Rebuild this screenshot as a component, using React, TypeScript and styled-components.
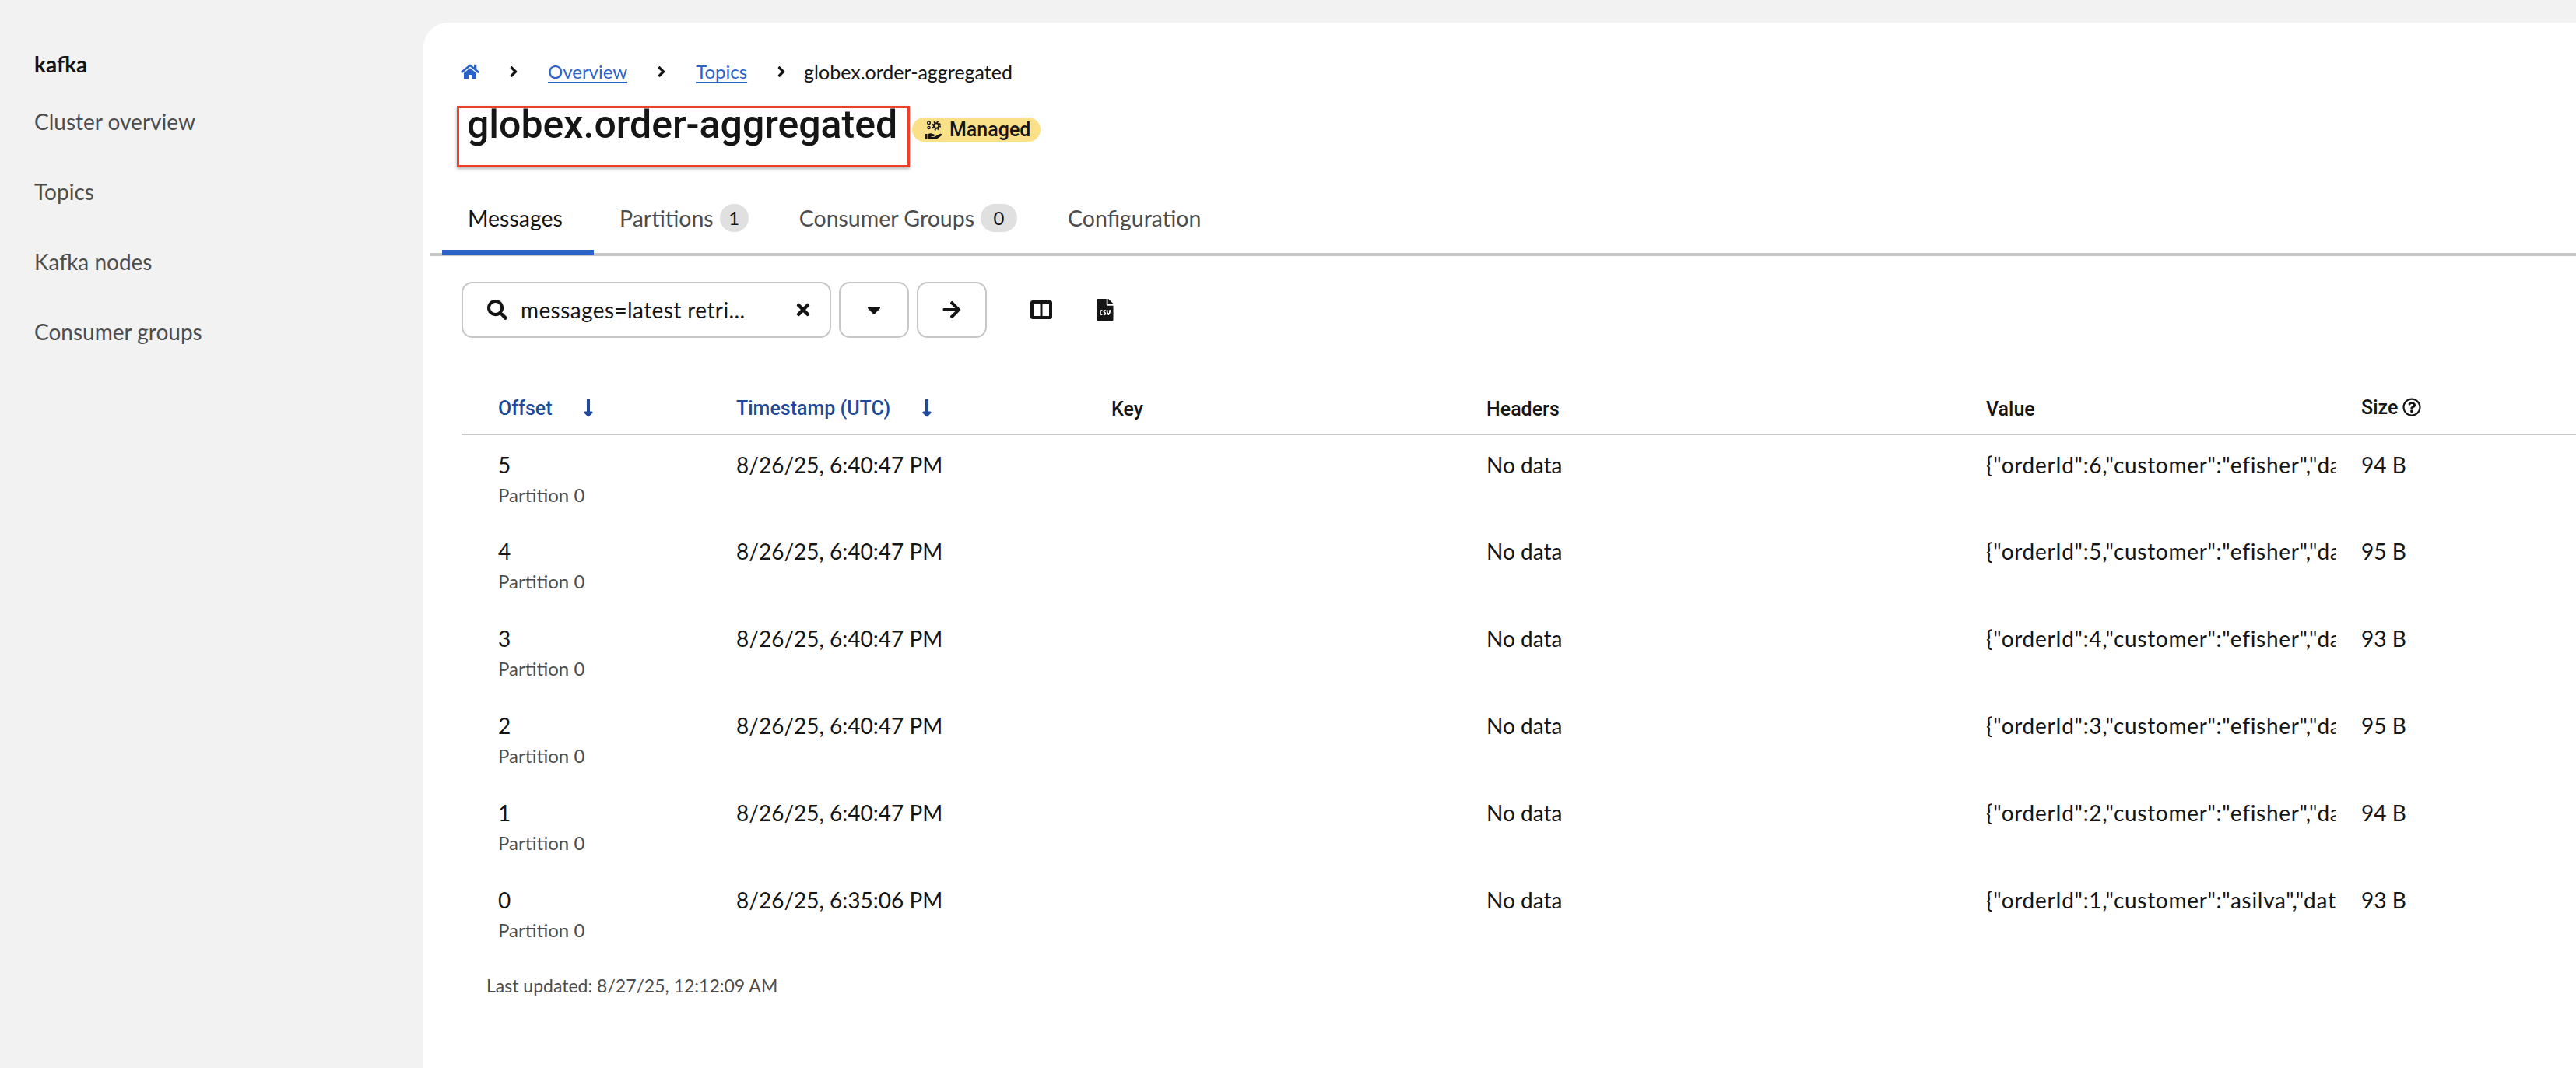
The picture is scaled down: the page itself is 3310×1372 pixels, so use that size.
import React from "react";
import styled, { createGlobalStyle } from "styled-components";
import {
  FaAngleRight,
  FaArrowRight,
  FaCaretDown,
  FaFileCsv,
  FaHome,
  FaLongArrowAltDown,
  FaRegQuestionCircle,
  FaSearch,
  FaTimes,
} from "react-icons/fa";

const GlobalStyle = createGlobalStyle`
  html, body {
    margin: 0;
    padding: 0;
    background: #f2f2f2;
    overflow: hidden;
  }
  body {
    font-family: "Lato", "Liberation Sans", sans-serif;
    font-size: 28px;
    line-height: 42px;
    color: #151515;
  }
`;

const navItems = ["Cluster overview", "Topics", "Kafka nodes", "Consumer groups"];

const messages = [
  { offset: 5, time: "8/26/25, 6:40:47 PM", value: '{"orderId":6,"customer":"efisher","dat', size: "94 B" },
  { offset: 4, time: "8/26/25, 6:40:47 PM", value: '{"orderId":5,"customer":"efisher","dat', size: "95 B" },
  { offset: 3, time: "8/26/25, 6:40:47 PM", value: '{"orderId":4,"customer":"efisher","dat', size: "93 B" },
  { offset: 2, time: "8/26/25, 6:40:47 PM", value: '{"orderId":3,"customer":"efisher","dat', size: "95 B" },
  { offset: 1, time: "8/26/25, 6:40:47 PM", value: '{"orderId":2,"customer":"efisher","dat', size: "94 B" },
  { offset: 0, time: "8/26/25, 6:35:06 PM", value: '{"orderId":1,"customer":"asilva","date', size: "93 B" },
];

const ManagedIcon = () => (
  <svg width="22" height="24" viewBox="0 0 22 24" fill="#151515">
    <circle cx="14" cy="6.500" r="3.200" fill="none" stroke="#151515" strokeWidth="2" />
    <circle cx="14" cy="6.500" r="5" fill="none" stroke="#151515" strokeWidth="2" strokeDasharray="2 1.930" />
    <circle cx="4.500" cy="2.800" r="1.800" fill="none" stroke="#151515" strokeWidth="1.400" />
    <circle cx="4.500" cy="9" r="1.600" fill="none" stroke="#151515" strokeWidth="1.300" />
    <path d="M0 17h2.500v6.500H0zM3.500 17.300c1.800-1.300 3.500-1.300 5-.6l2.600.9c1.500.5 1.200 2.300-.4 2.300H7.500v.8h4l7.300-3.700c1.700-.8 3 1 1.800 2.200l-5 3.800c-.5.400-1 .5-1.600.5H3.500z" />
  </svg>
);

const ColumnsIcon = () => (
  <svg width="28" height="24" viewBox="0 0 28 24">
    <path
      fill="#151515"
      fillRule="evenodd"
      d="M3 0h22a3 3 0 0 1 3 3v18a3 3 0 0 1-3 3H3a3 3 0 0 1-3-3V3a3 3 0 0 1 3-3zm1 5v15h8.500V5zm11.500 0v15H24V5z"
    />
  </svg>
);

export default function App() {
  return (
    <Page>
      <GlobalStyle />
      <Sidebar>
        <ClusterName>kafka</ClusterName>
        {navItems.map((item) => (
          <NavItem key={item}>{item}</NavItem>
        ))}
      </Sidebar>
      <Main>
        <Breadcrumbs>
          <HomeLink>
            <FaHome size={24} />
          </HomeLink>
          <Crumb>
            <FaAngleRight size={22} />
          </Crumb>
          <CrumbLink>Overview</CrumbLink>
          <Crumb>
            <FaAngleRight size={22} />
          </Crumb>
          <CrumbLink>Topics</CrumbLink>
          <Crumb>
            <FaAngleRight size={22} />
          </Crumb>
          <CrumbCurrent>globex.order-aggregated</CrumbCurrent>
        </Breadcrumbs>

        <TitleRow>
          <Title>globex.order-aggregated</Title>
          <Badge>
            <ManagedIcon />
            Managed
          </Badge>
        </TitleRow>

        <Tabs>
          <Tab $active>Messages</Tab>
          <Tab>
            Partitions <Count>1</Count>
          </Tab>
          <Tab>
            Consumer Groups <Count $wide>0</Count>
          </Tab>
          <Tab>Configuration</Tab>
        </Tabs>

        <Toolbar>
          <SearchBox>
            <FaSearch size={26} />
            <SearchText>messages=latest retri...</SearchText>
            <FaTimes size={24} />
          </SearchBox>
          <IconButton>
            <FaCaretDown size={28} />
          </IconButton>
          <IconButton>
            <FaArrowRight size={26} />
          </IconButton>
          <PlainIcon>
            <ColumnsIcon />
          </PlainIcon>
          <PlainIcon>
            <FaFileCsv size={28} />
          </PlainIcon>
        </Toolbar>

        <Table>
          <colgroup>
            <col width="306" />
            <col width="482" />
            <col width="482" />
            <col width="642" />
            <col width="482" />
            <col />
          </colgroup>
          <thead>
            <tr>
              <HeadCell $sorted>
                Offset
                <SortArrow>
                  <FaLongArrowAltDown size={26} />
                </SortArrow>
              </HeadCell>
              <HeadCell $sorted>
                Timestamp (UTC)
                <SortArrow>
                  <FaLongArrowAltDown size={26} />
                </SortArrow>
              </HeadCell>
              <HeadCell>Key</HeadCell>
              <HeadCell>Headers</HeadCell>
              <HeadCell>Value</HeadCell>
              <HeadCell>
                Size
                <HelpIcon>
                  <FaRegQuestionCircle size={24} />
                </HelpIcon>
              </HeadCell>
            </tr>
          </thead>
          <tbody>
            {messages.map((m) => (
              <tr key={m.offset}>
                <Cell>
                  {m.offset}
                  <Partition>Partition 0</Partition>
                </Cell>
                <Cell>{m.time}</Cell>
                <Cell />
                <Cell>No data</Cell>
                <Cell>
                  <ValueClip>{m.value}</ValueClip>
                </Cell>
                <Cell>{m.size}</Cell>
              </tr>
            ))}
          </tbody>
        </Table>

        <LastUpdated>Last updated: 8/27/25, 12:12:09 AM</LastUpdated>
      </Main>
    </Page>
  );
}

const Page = styled.div`
  display: flex;
  width: 3310px;
  height: 1372px;
  overflow: hidden;
  background: #f2f2f2;
`;

const Sidebar = styled.nav`
  display: flex;
  flex-direction: column;
  flex: 0 0 544px;
  padding: 61px 0 0 44px;
  box-sizing: border-box;
`;

const ClusterName = styled.div`
  font-weight: 700;
  margin-bottom: 32px;
`;

const NavItem = styled.div`
  color: #4d4d4d;
  height: 90px;
`;

const Main = styled.main`
  flex: 1;
  margin-top: 29px;
  padding-top: 42px;
  background: #fff;
  border-top-left-radius: 32px;
  min-width: 0;
`;

const Breadcrumbs = styled.div`
  display: flex;
  align-items: center;
  padding-left: 48px;
  height: 42px;
  font-size: 25px;
`;

const HomeLink = styled.span`
  display: flex;
  color: #2b62c8;
`;

const Crumb = styled.span`
  display: flex;
  width: 88px;
  justify-content: center;
`;

const CrumbLink = styled.span`
  color: #2b62c8;
  font-size: 24px;
  text-decoration: underline;
  text-underline-offset: 4px;
`;

const CrumbCurrent = styled.span`
  margin-left: -15px;
`;

const TitleRow = styled.div`
  display: flex;
  align-items: flex-start;
  margin: 23px 0 0 43px;
`;

const Title = styled.h1`
  margin: 0;
  width: 582px;
  height: 79px;
  box-sizing: border-box;
  padding: 0 0 0 10px;
  border: 3px solid #ee3f28;
  box-shadow: 0 2px 4px rgba(0, 0, 0, 0.3);
  font-family: "Roboto", "Lato", sans-serif;
  font-size: 50px;
  font-weight: 500;
  line-height: 42px;
  white-space: nowrap;
`;

const Badge = styled.span`
  display: inline-flex;
  align-items: center;
  gap: 9px;
  height: 31px;
  margin: 15px 0 0 3px;
  padding: 0 13px 0 17px;
  border-radius: 16px;
  background: #fbe08a;
  font-family: "Roboto", "Lato", sans-serif;
  font-size: 25px;
  font-weight: 500;
  line-height: 31px;
`;

const Tabs = styled.div`
  display: flex;
  margin: 24px 0 0 8px;
  padding-left: 16px;
  height: 86px;
  border-bottom: 4px solid #c7c7c7;
`;

const Tab = styled.div<{ $active?: boolean }>`
  display: flex;
  align-items: center;
  gap: 8px;
  box-sizing: border-box;
  padding: 0 32px 0 33px;
  margin-bottom: -2px;
  font-size: 28.5px;
  min-width: ${(p) => (p.$active ? "195px" : "0")};
  color: ${(p) => (p.$active ? "#151515" : "#4d4d4d")};
  border-bottom: 6px solid ${(p) => (p.$active ? "#2b62c8" : "transparent")};
`;

const Count = styled.span<{ $wide?: boolean }>`
  display: inline-flex;
  align-items: center;
  justify-content: center;
  width: ${(p) => (p.$wide ? "47px" : "37px")};
  height: 36px;
  box-sizing: border-box;
  border-radius: 18px;
  background: #e0e0e0;
  font-size: 24px;
  color: #151515;
`;

const Toolbar = styled.div`
  display: flex;
  align-items: center;
  gap: 10px;
  margin: 33px 0 0 49px;
  height: 72px;
`;

const SearchBox = styled.div`
  display: flex;
  align-items: center;
  width: 475px;
  height: 72px;
  box-sizing: border-box;
  padding: 0 22px 0 31px;
  border: 2px solid #c7c7c7;
  border-radius: 14px;
  gap: 17px;
`;

const SearchText = styled.span`
  flex: 1;
  white-space: nowrap;
  letter-spacing: 0.4px;
`;

const IconButton = styled.div`
  display: flex;
  align-items: center;
  justify-content: center;
  width: 90px;
  height: 72px;
  box-sizing: border-box;
  border: 2px solid #c7c7c7;
  border-radius: 14px;
`;

const PlainIcon = styled.div`
  display: flex;
  align-items: center;
  justify-content: center;
  width: 28px;
  margin-left: 46px;
  &:last-child {
    margin-left: 44px;
  }
`;

const Table = styled.table`
  width: 2717px;
  margin: 57px 0 0 49px;
  table-layout: fixed;
  border-collapse: collapse;
`;

const HeadCell = styled.th<{ $sorted?: boolean }>`
  height: 67px;
  padding: ${(p) => (p.$sorted ? "5px" : "3px")} 0 0 47px;
  box-sizing: border-box;
  border-bottom: 2px solid #c7c7c7;
  text-align: left;
  font-family: "Roboto", "Lato", sans-serif;
  font-size: 25px;
  font-weight: 500;
  color: ${(p) => (p.$sorted ? "#1f4a9c" : "#151515")};
`;

const SortArrow = styled.span`
  margin-left: 34px;
  vertical-align: -4px;
`;

const HelpIcon = styled.span`
  margin-left: 6px;
  vertical-align: -3px;
`;

const Cell = styled.td`
  height: 112px;
  padding: 17px 0 0 47px;
  box-sizing: border-box;
  vertical-align: top;
  white-space: nowrap;
`;

const Partition = styled.div`
  font-size: 24px;
  line-height: 36px;
  color: #4d4d4d;
`;

const ValueClip = styled.div`
  width: 450px;
  overflow: hidden;
  letter-spacing: 0.7px;
`;

const LastUpdated = styled.div`
  margin: 18px 0 0 81px;
  font-size: 23px;
  line-height: 36px;
  color: #4d4d4d;
`;
